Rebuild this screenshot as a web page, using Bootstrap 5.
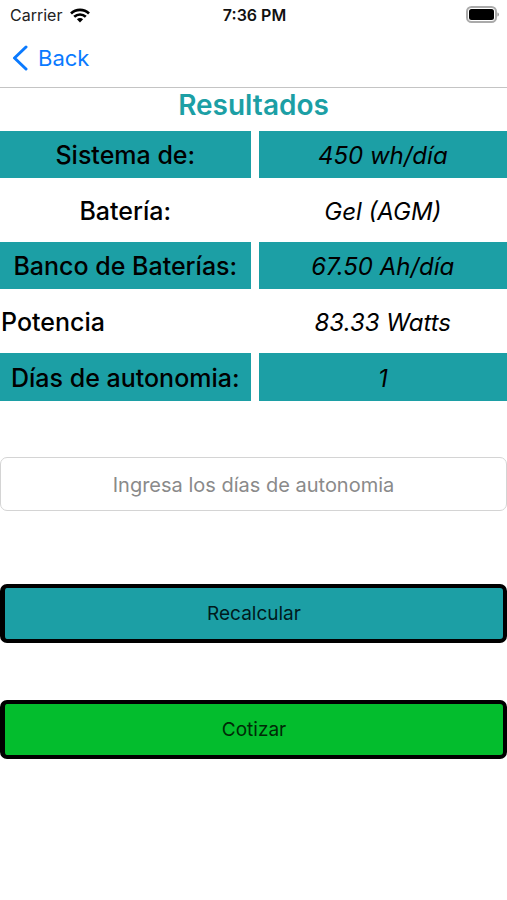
<!DOCTYPE html>
<html lang="es">
<head>
<meta charset="utf-8">
<meta name="viewport" content="width=device-width, initial-scale=1">
<title>Resultados</title>
<link rel="stylesheet" href="https://cdn.jsdelivr.net/npm/bootstrap@5.3.0/dist/css/bootstrap.min.css">
<style>
  :root { --teal: #1c9fa5; --green: #03bd2d; }
  body { font-family: Inter, "Liberation Sans", sans-serif; color: #000; background: #fff; }
  .status-bar { height: 30px; padding: 0 8px 0 10px; font-size: 16px; line-height: 30px; color: #222; }
  .status-bar .clock { color: #111; }
  .nav-bar { height: 58px; padding: 0 12px 2px; border-bottom: 1px solid #c4c4c4; }
  .back-link { gap: 10px; font-size: 22px; line-height: 28px; color: #0a7aff; }
  .page-title { font-size: 28px; line-height: 35px; color: var(--teal); }
  .results { margin-top: 8px; table-layout: fixed; border-collapse: separate; border-spacing: 0; font-size: 24px; line-height: 31px; }
  .results th, .results td { height: 47px; padding: 9px 0 7px; background-clip: padding-box; text-align: center; }
  .results th { width: 51%; border-right: 8px solid #fff; font-size: 25px; font-weight: 500; }
  .results td { font-style: italic; }
  .results tr + tr > * { height: 55px; border-top: 8px solid #fff; }
  .results tr:nth-child(even) > *, .results tr:last-child > * { height: 56px; }
  .results tr:nth-child(odd) > * { background-color: var(--teal); }
  .results .start { padding-left: 1px; text-align: left; }
  .days-input { height: 54px; margin-top: 56px; padding-top: 8px; border: 1px solid #d4d4d4; border-radius: 7px; font-size: 20px; text-align: center; }
  .days-input::placeholder { color: #8a8a8a; }
  .action { height: 59px; border: 4px solid #000; border-left-width: 5px; border-radius: 7px; font-size: 19px; line-height: 30px; color: #001a1c; }
  .action-recalc { margin-top: 73px; background: var(--teal); }
  .action-quote { margin-top: 57px; background: var(--green); color: #002a06; }
</style>
</head>
<body>
<header>
  <div class="status-bar row g-0">
    <div class="col d-flex align-items-center gap-2">
      <span>Carrier</span>
      <svg width="20" height="15" viewBox="0 0 20 15" fill="none" stroke="#000" stroke-width="2.7" aria-hidden="true">
        <path d="M1 5.4C6 .7 14 .7 19 5.4M4.2 8.8c3.4-3.1 8.2-3.1 11.6 0"/>
        <path d="M6.9 11.3c1.9-1.6 4.3-1.6 6.2 0L10 14.5z" fill="#000" stroke="none"/>
      </svg>
    </div>
    <div class="col-auto clock fw-semibold">7:36 PM</div>
    <div class="col d-flex align-items-center justify-content-end">
      <svg width="34" height="18" viewBox="0 0 34 18" aria-hidden="true">
        <rect x="2" y="1" width="29" height="15" rx="4.5" fill="#fff" stroke="#aaa" stroke-width="2"/>
        <rect x="4" y="3" width="25" height="11" rx="2.5" fill="#000"/>
        <path d="M32.5 6.5c1.8.7 1.8 3.3 0 4z" fill="#888"/>
      </svg>
    </div>
  </div>
  <nav class="nav-bar d-flex align-items-center">
    <a href="#" class="back-link d-flex align-items-center text-decoration-none">
      <svg width="16" height="26" viewBox="0 0 16 26" fill="none" stroke="currentColor" stroke-width="3" stroke-linecap="round" stroke-linejoin="round" aria-hidden="true"><path d="M14 2 2.5 13 14 24"/></svg>
      <span>Back</span>
    </a>
  </nav>
</header>
<main>
  <h1 class="page-title fw-semibold text-center m-0">Resultados</h1>
  <table class="results w-100">
    <tbody>
      <tr><th scope="row">Sistema de:</th><td>450 wh/día</td></tr>
      <tr><th scope="row">Batería:</th><td>Gel (AGM)</td></tr>
      <tr><th scope="row">Banco de Baterías:</th><td>67.50 Ah/día</td></tr>
      <tr><th scope="row" class="start">Potencia</th><td>83.33 Watts</td></tr>
      <tr><th scope="row">Días de autonomia:</th><td>1</td></tr>
    </tbody>
  </table>
  <form>
    <input type="text" inputmode="numeric" class="days-input form-control" placeholder="Ingresa los días de autonomia" aria-label="Días de autonomia">
    <button type="button" class="action action-recalc d-block w-100">Recalcular</button>
    <button type="button" class="action action-quote d-block w-100">Cotizar</button>
  </form>
</main>
<script src="https://cdn.jsdelivr.net/npm/bootstrap@5.3.0/dist/js/bootstrap.bundle.min.js"></script>
</body>
</html>
